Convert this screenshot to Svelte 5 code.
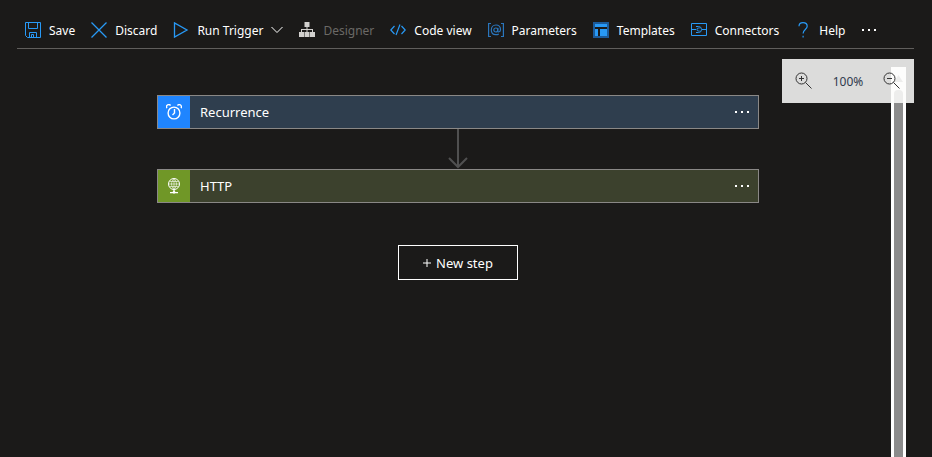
<script>
  const commands = [
    { id: 'save', label: 'Save' },
    { id: 'discard', label: 'Discard' },
    { id: 'run', label: 'Run Trigger', menu: true },
    { id: 'designer', label: 'Designer', disabled: true },
    { id: 'code', label: 'Code view' },
    { id: 'parameters', label: 'Parameters' },
    { id: 'templates', label: 'Templates' },
    { id: 'connectors', label: 'Connectors' },
    { id: 'help', label: 'Help' }
  ];
</script>

{#snippet icon(id)}
  <svg class="icon" viewBox="0 0 16 16" aria-hidden="true">
    {#if id === 'save'}
      <path d="M.5.5h15v15h-13l-2-2zM3.5.5v6h9v-6M4.5 15.5v-5h7v5M6.5 15.5v-3h2v3" />
    {:else if id === 'discard'}
      <path d="M.5.5l15 15M15.5.5l-15 15" stroke-width="1.3" />
    {:else if id === 'run'}
      <path d="M1.5.9v14.2L14 8z" stroke-width="1.3" />
    {:else if id === 'designer'}
      <g fill="#d2d0ce" stroke="none">
        <path d="M5.500 0h5v5h-5zM0 10h5v5H0zM5.500 10h5v5h-5zM11 10h5v5h-5z" />
        <path d="M7.500 5h1v5h-1zM2 7h12v1H2zM2 7h1v3H2zM13 7h1v3h-1z" />
      </g>
    {:else if id === 'code'}
      <path d="M4.500 4L.8 8l3.700 4M11.500 4l3.700 4-3.700 4M10 2.500L6 13" stroke-width="1.200" />
    {:else if id === 'parameters'}
      <g stroke="#2a76bd" stroke-width="1.200">
        <path d="M3 1.500H.6v13H3M13 1.500h2.400v13H13" />
        <circle cx="7.800" cy="8" r="2" />
        <path d="M10 5.800l-.4 3.100c0 1.500 2.900 1.200 2.900-1.500 0-2.600-2-4.400-4.500-4.400-2.800 0-4.700 2.200-4.700 5 0 2.800 1.900 4.700 4.500 4.700 1.200 0 2.200-.3 3-.8" />
      </g>
    {:else if id === 'templates'}
      <path d="M1 1h14v14H1z" stroke="#1c5a99" stroke-width="2" />
      <path d="M2 2h12v3H2zM2 7h3v7H2zM7 7h7v7H7z" fill="#2899f5" stroke="none" />
    {:else if id === 'connectors'}
      <path d="M.5 1.500h15v12H.5zM.5 7.500H5M11 7.500h4.500M5 4.500h2.500a3 3 0 0 1 0 6H5M8.500 6h-1a1.500 1.500 0 0 0 0 3h1" />
    {:else if id === 'help'}
      <path d="M4 4.300C4 1.900 5.700.6 8 .6s4.200 1.300 4.200 3.600c0 3.300-4.100 3.300-4.100 7.200M8.100 13.700v1.700" stroke-width="1.200" />
    {/if}
  </svg>
{/snippet}

{#snippet dots()}
  <svg class="dots" viewBox="0 0 16 4" aria-hidden="true">
    <path d="M1 1h2v2H1zM7 1h2v2H7zM13 1h2v2h-2z" fill="currentColor" />
  </svg>
{/snippet}

{#snippet magnifier(plus)}
  <svg class="magnifier" viewBox="0 0 18 18" aria-hidden="true">
    <circle cx="6.500" cy="6.500" r="5.500" />
    <path d="M10.500 10.500l6 6M4 6.500h5" />
    {#if plus}<path d="M6.500 4v5" />{/if}
  </svg>
{/snippet}

<div class="page">
  <header class="toolbar">
    {#each commands as command (command.id)}
      <button class="command" disabled={command.disabled}>
        {@render icon(command.id)}
        <span>{command.label}</span>
        {#if command.menu}
          <svg class="chevron" viewBox="0 0 12 8" aria-hidden="true"><path d="M.5 1L6 6.500 11.500 1" /></svg>
        {/if}
      </button>
    {/each}
    <button class="command" aria-label="More commands">{@render dots()}</button>
  </header>

  <main class="workspace">
    <div class="flow">
      <section class="card recurrence">
        <div class="badge">
          <svg viewBox="0 0 16 16" aria-hidden="true">
            <circle cx="8" cy="9" r="5.900" />
            <path d="M8.500 5v4l-2 2M1 4.200A2.200 2.200 0 0 1 4.600 1.500M15 4.200a2.200 2.200 0 0 0-3.600-2.700" />
          </svg>
        </div>
        <h2>Recurrence</h2>
        <button class="more" aria-label="Recurrence options">{@render dots()}</button>
      </section>

      <svg class="arrow" viewBox="0 0 20 40" aria-hidden="true">
        <path d="M10 0v38M1 29l9 9 9-9" />
      </svg>

      <section class="card http">
        <div class="badge">
          <svg viewBox="0 0 16 16" aria-hidden="true">
            <circle cx="8" cy="6" r="5.500" />
            <path d="M2.700 6h10.600M3.500 3.500h9M3.500 8.500h9M8 .7v10.600M8 .7c-3.300 3-3.300 7.600 0 10.600M8 .7c3.300 3 3.300 7.600 0 10.600" stroke-width=".6" />
            <path d="M8 11.500v2.500M4 14.700h8" stroke-width="1.300" />
            <circle cx="8" cy="14.200" r="1" fill="currentColor" />
          </svg>
        </div>
        <h2>HTTP</h2>
        <button class="more" aria-label="HTTP options">{@render dots()}</button>
      </section>

      <button class="new-step">
        <svg viewBox="0 0 8 8" aria-hidden="true"><path d="M4 0v8M0 4h8" /></svg>
        New step
      </button>
    </div>

    <div class="track" aria-hidden="true">
      <svg viewBox="0 0 9 7"><path d="M4.500 0L9 7H0z" /></svg>
      <div class="thumb"></div>
    </div>

    <div class="zoom">
      <button aria-label="Zoom in">{@render magnifier(true)}</button>
      <output>100%</output>
      <button aria-label="Zoom out">{@render magnifier(false)}</button>
    </div>
  </main>
</div>

<style>
  :global(body) {
    margin: 0;
    background: #1b1a19;
  }

  .page {
    display: flex;
    flex-direction: column;
    box-sizing: border-box;
    height: 100vh;
    padding: 14px 18px 0 17px;
    overflow: hidden;
    background: #1b1a19;
    color: #fff;
    font-family: "Segoe UI", "Noto Sans", "Open Sans", sans-serif;
    font-size: 13px;
    line-height: 18px;
  }

  button {
    margin: 0;
    padding: 0;
    border: 0;
    background: none;
    color: inherit;
    font: inherit;
    cursor: pointer;
  }

  svg {
    display: block;
    flex: none;
    fill: none;
    stroke: currentColor;
  }

  .toolbar {
    display: flex;
    gap: 16px;
    height: 34px;
    padding-left: 8px;
    border-bottom: 1px solid #605e5c;
    font-size: 12px;
  }

  .command {
    display: flex;
    align-items: center;
    gap: 8px;
    height: 32px;
    white-space: nowrap;
  }

  .command span {
    padding-top: 2px;
  }

  .command:disabled {
    color: #6b6966;
    cursor: default;
  }

  .icon {
    width: 16px;
    height: 16px;
    stroke: #2899f5;
  }

  .chevron {
    width: 12px;
    height: 8px;
  }

  .dots {
    width: 16px;
    height: 4px;
    stroke: none;
  }

  .workspace {
    position: relative;
    display: flex;
    flex: 1;
    min-height: 0;
    padding: 18px 8px 0;
  }

  .flow {
    display: flex;
    flex: 1;
    flex-direction: column;
    align-items: center;
    padding-top: 28px;
  }

  .card {
    display: flex;
    align-items: center;
    box-sizing: border-box;
    width: 100%;
    max-width: 602px;
    height: 34px;
    border: 1px solid #8a8886;
  }

  .recurrence {
    background: #2f3e4e;
  }

  .http {
    background: #3c412d;
  }

  .badge {
    display: grid;
    place-items: center;
    width: 32px;
    height: 32px;
  }

  .badge svg {
    width: 16px;
    height: 16px;
  }

  .recurrence .badge {
    background: #1f85ff;
  }

  .recurrence .badge svg {
    stroke-width: 1.4;
  }

  .http .badge {
    background: #709727;
  }

  h2 {
    flex: 1;
    margin: 0;
    padding-left: 10px;
    font-size: 13px;
    font-weight: 400;
  }

  .more {
    height: 32px;
    padding: 0 8px;
  }

  .arrow {
    width: 20px;
    height: 40px;
    stroke: #505050;
    stroke-width: 2;
  }

  .new-step {
    display: flex;
    align-items: center;
    justify-content: center;
    gap: 5px;
    box-sizing: border-box;
    width: 120px;
    height: 35px;
    margin-top: 42px;
    border: 1px solid #fff;
  }

  .new-step svg {
    width: 8px;
    height: 8px;
  }

  .track {
    display: flex;
    flex-direction: column;
    align-items: center;
    gap: 8px;
    box-sizing: border-box;
    width: 15px;
    padding-top: 8px;
    background: #fff;
  }

  .track svg {
    width: 9px;
    height: 7px;
    fill: #8c8c8c;
    stroke: none;
  }

  .thumb {
    flex: 1;
    width: 9px;
    border-radius: 4px 4px 0 0;
    background: #8c8c8c;
  }

  .zoom {
    position: absolute;
    top: 10px;
    right: 0;
    display: flex;
    align-items: center;
    justify-content: space-between;
    box-sizing: border-box;
    width: 132px;
    height: 44px;
    padding: 0 13px;
    background: rgb(253 253 252 / 86%);
    color: #303a4d;
    font-size: 12px;
  }

  .zoom output {
    padding-top: 2px;
  }

  .magnifier {
    width: 18px;
    height: 18px;
    stroke: #333;
  }
</style>
